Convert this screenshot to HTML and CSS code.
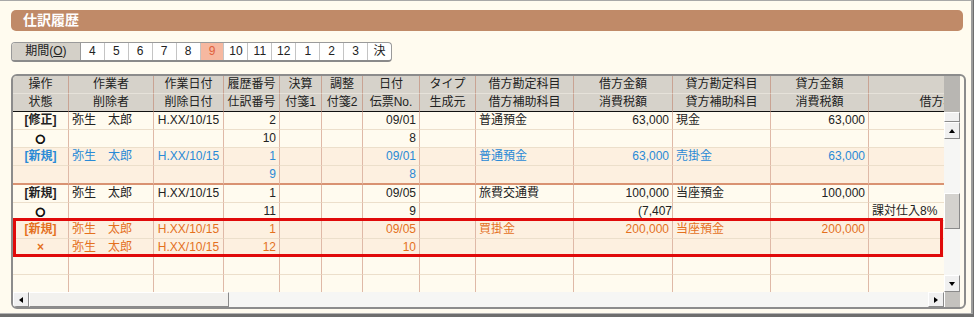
FILE: index.html
```html
<!DOCTYPE html>
<html lang="ja">
<head>
    <meta charset="UTF-8">
    <title>仕訳履歴</title>
    <link rel="stylesheet" href="styles.css">
</head>
<body>
    <div class="panel">
        <div class="content">
            <!-- Title -->
            <div class="title">仕訳履歴</div>

            <!-- Period selector -->
            <div class="period">
                <div class="period-label">期間(<u>O</u>)</div>
                <div class="period-item">4</div>
                <div class="period-item">5</div>
                <div class="period-item">6</div>
                <div class="period-item">7</div>
                <div class="period-item">8</div>
                <div class="period-item active">9</div>
                <div class="period-item">10</div>
                <div class="period-item">11</div>
                <div class="period-item">12</div>
                <div class="period-item">1</div>
                <div class="period-item">2</div>
                <div class="period-item">3</div>
                <div class="period-item">決</div>
            </div>

            <!-- History grid -->
            <div class="grid-frame">
                <div class="grid-view">
                    <table class="journal">
                        <colgroup>
                            <col class="w56"><col class="w85"><col class="w70"><col class="w56">
                            <col class="w42"><col class="w41"><col class="w57"><col class="w56">
                            <col class="w98"><col class="w99"><col class="w98"><col class="w98">
                            <col class="w162">
                        </colgroup>
                        <thead>
                            <tr class="head-top">
                                <th>操作</th><th>作業者</th><th>作業日付</th><th>履歴番号</th>
                                <th>決算</th><th>調整</th><th>日付</th><th>タイプ</th>
                                <th>借方勘定科目</th><th>借方金額</th><th>貸方勘定科目</th><th>貸方金額</th>
                                <th></th>
                            </tr>
                            <tr class="head-bottom">
                                <th>状態</th><th>削除者</th><th>削除日付</th><th>仕訳番号</th>
                                <th>付箋1</th><th>付箋2</th><th>伝票No.</th><th>生成元</th>
                                <th>借方補助科目</th><th>消費税額</th><th>貸方補助科目</th><th>消費税額</th>
                                <th>借方税区分</th>
                            </tr>
                        </thead>
                        <tbody>
                            <tr>
                                <td class="op">[修正]</td><td>弥生　太郎</td><td class="mid">H.XX/10/15</td><td class="num">2</td>
                                <td></td><td></td><td class="num">09/01</td><td></td>
                                <td>普通預金</td><td class="num">63,000</td><td>現金</td><td class="num">63,000</td><td></td>
                            </tr>
                            <tr>
                                <td class="op"><span class="ring">○</span></td><td></td><td></td><td class="num">10</td>
                                <td></td><td></td><td class="num">8</td><td></td>
                                <td></td><td></td><td></td><td></td><td></td>
                            </tr>
                            <tr class="alt blue">
                                <td class="op">[新規]</td><td>弥生　太郎</td><td class="mid">H.XX/10/15</td><td class="num">1</td>
                                <td></td><td></td><td class="num">09/01</td><td></td>
                                <td>普通預金</td><td class="num">63,000</td><td>売掛金</td><td class="num">63,000</td><td></td>
                            </tr>
                            <tr class="alt blue group-end">
                                <td class="op"></td><td></td><td></td><td class="num">9</td>
                                <td></td><td></td><td class="num">8</td><td></td>
                                <td></td><td></td><td></td><td></td><td></td>
                            </tr>
                            <tr>
                                <td class="op">[新規]</td><td>弥生　太郎</td><td class="mid">H.XX/10/15</td><td class="num">1</td>
                                <td></td><td></td><td class="num">09/05</td><td></td>
                                <td>旅費交通費</td><td class="num">100,000</td><td>当座預金</td><td class="num">100,000</td><td></td>
                            </tr>
                            <tr>
                                <td class="op"><span class="ring">○</span></td><td></td><td></td><td class="num">11</td>
                                <td></td><td></td><td class="num">9</td><td></td>
                                <td></td><td class="num clip">(7,407</td><td></td><td></td><td>課対仕入8%</td>
                            </tr>
                            <tr class="alt orange">
                                <td class="op">[新規]</td><td>弥生　太郎</td><td class="mid">H.XX/10/15</td><td class="num">1</td>
                                <td></td><td></td><td class="num">09/05</td><td></td>
                                <td>買掛金</td><td class="num">200,000</td><td>当座預金</td><td class="num">200,000</td><td></td>
                            </tr>
                            <tr class="alt orange">
                                <td class="op">×</td><td>弥生　太郎</td><td class="mid">H.XX/10/15</td><td class="num">12</td>
                                <td></td><td></td><td class="num">10</td><td></td>
                                <td></td><td></td><td></td><td></td><td></td>
                            </tr>
                            <tr>
                                <td></td><td></td><td></td><td></td><td></td><td></td><td></td>
                                <td></td><td></td><td></td><td></td><td></td><td></td>
                            </tr>
                            <tr>
                                <td></td><td></td><td></td><td></td><td></td><td></td><td></td>
                                <td></td><td></td><td></td><td></td><td></td><td></td>
                            </tr>
                        </tbody>
                    </table>
                </div>

                <!-- Scroll bars -->
                <div class="vscroll">
                    <div class="vscroll-head"></div>
                    <div class="sb-btn sb-stub"></div>
                    <div class="sb-btn"><span class="arrow up"></span></div>
                    <div class="sb-track">
                        <div class="sb-thumb v-thumb"></div>
                    </div>
                    <div class="sb-btn"><span class="arrow down"></span></div>
                </div>
                <div class="hscroll">
                    <div class="sb-btn"><span class="arrow left"></span></div>
                    <div class="sb-thumb h-thumb"></div>
                    <div class="sb-track"></div>
                    <div class="sb-btn"><span class="arrow right"></span></div>
                </div>
                <div class="corner"></div>

                <!-- Highlight marker over the deleted entry -->
                <div class="highlight"></div>
            </div>
        </div>
    </div>
</body>
</html>
```

FILE: styles.css
```css
/* Global Styles */
body {
    margin: 0;
    background: #6e6e6e;
    font-family: "Liberation Sans", "Noto Sans CJK JP", sans-serif;
    font-size: 12px;
    color: #222;
}

.panel {
    box-sizing: border-box;
    width: 973px;
    height: 314px;
    background: #fffbef;
    border-top: 1px solid #a8a8a8;
    border-right: 2px solid #9c9c9c;
    border-bottom: 1px solid #b4b4b4;
    padding-top: 9px;
}

.content {
    width: 952px;
    margin-left: 11px;
}

/* Title bar */
.title {
    height: 21px;
    line-height: 21px;
    padding-left: 12px;
    background: #c08a68;
    border-radius: 5px;
    color: #fff;
    font-size: 14px;
    font-weight: bold;
}

/* Period selector */
.period {
    display: flex;
    box-sizing: border-box;
    width: 381px;
    height: 20px;
    margin-top: 11px;
    background: #fff;
    border: 1px solid #9a9a9a;
    border-bottom: 2px solid #8a8a8a;
    border-radius: 4px;
    overflow: hidden;
}

.period-label {
    width: 68px;
    line-height: 17px;
    text-align: center;
    background: #d4d0c8;
    border-right: 1px solid #9a9a9a;
}

.period-item {
    width: 23px;
    line-height: 17px;
    text-align: center;
    border-right: 1px solid #c4c4c4;
}

.period-item:last-child {
    border-right: none;
}

.period-item.active {
    background: #f6b8a0;
    color: #e0603c;
}

/* Grid frame */
.grid-frame {
    position: relative;
    display: grid;
    grid-template-columns: 931px 16px;
    grid-template-rows: 216px 15px;
    width: 951px;
    margin-top: 12px;
    border: 2px solid #8c8c8c;
    border-radius: 6px;
    overflow: hidden;
    background: #fffbef;
}

.grid-view {
    overflow: hidden;
}

.journal {
    table-layout: fixed;
    border-collapse: separate;
    border-spacing: 0;
    width: 1018px;
}

.w41 { width: 41px; }
.w42 { width: 42px; }
.w56 { width: 56px; }
.w57 { width: 57px; }
.w70 { width: 70px; }
.w85 { width: 85px; }
.w98 { width: 98px; }
.w99 { width: 99px; }
.w162 { width: 162px; }

.journal th,
.journal td {
    box-sizing: border-box;
    height: 18px;
    padding: 0 3px;
    line-height: 17px;
    white-space: nowrap;
    overflow: hidden;
    border-right: 1px solid #dfb9a7;
    border-bottom: 1px solid #ecdfcb;
    text-align: left;
}

.journal th {
    font-weight: normal;
    text-align: center;
    background: #d6d2ca;
    border-right-color: #c9a393;
    border-bottom-color: #e6e2da;
}

.journal .head-bottom th {
    border-bottom-color: #111;
}

.journal td.op {
    text-align: center;
    font-weight: bold;
}

.journal td.mid {
    text-align: center;
}

.journal td.num {
    text-align: right;
}

.journal td.clip {
    padding-right: 0;
}

.ring {
    font-family: "DejaVu Sans", sans-serif;
    font-size: 11px;
    font-weight: bold;
    -webkit-text-stroke: 1px #111;
}

.journal tr.alt td {
    background: #fdf0e0;
}

.journal tr.blue td {
    color: #2a8ad6;
}

.journal tr.orange td {
    color: #e4701e;
}

.journal tr.group-end td {
    border-bottom: 2px solid #d99272;
}

/* Scroll bars */
.vscroll {
    display: flex;
    flex-direction: column;
    background: #f4f4f4;
}

.vscroll-head {
    height: 36px;
    background: #b8b6b2;
}

.sb-btn {
    box-sizing: border-box;
    display: flex;
    align-items: center;
    justify-content: center;
    flex: none;
    width: 16px;
    height: 17px;
    background: #f0f0f0;
    border: 1px solid;
    border-color: #fff #8a8a8a #8a8a8a #fff;
}

.sb-stub {
    height: 10px;
}

.sb-track {
    flex: 1;
    display: flex;
    flex-direction: column;
    background: #f6f6f4;
}

.sb-thumb {
    box-sizing: border-box;
    background: #e6e4e0;
    border: 1px solid;
    border-color: #fff #8a8a8a #8a8a8a #fff;
}

.v-thumb {
    height: 36px;
    margin-top: 54px;
    background: #d4d2ce;
}

.hscroll {
    display: flex;
    background: #f6f6f4;
}

.hscroll .sb-btn {
    width: 16px;
    height: 15px;
}

.h-thumb {
    width: 200px;
    background: #f2f1ee;
}

.hscroll .sb-track {
    flex: 1;
}

.corner {
    background: #c4c2be;
    border-left: 1px solid #fff;
}

.arrow {
    width: 0;
    height: 0;
    border: 3px solid transparent;
}

.arrow.up {
    border-bottom: 4px solid #000;
    border-top-width: 0;
}

.arrow.down {
    border-top: 4px solid #000;
    border-bottom-width: 0;
}

.arrow.left {
    border-right: 4px solid #000;
    border-left-width: 0;
}

.arrow.right {
    border-left: 4px solid #000;
    border-right-width: 0;
}

/* Red annotation box */
.highlight {
    position: absolute;
    top: 142px;
    left: 0;
    width: 930px;
    height: 39px;
    box-sizing: border-box;
    border: 3px solid #e00a0a;
    pointer-events: none;
}
```
